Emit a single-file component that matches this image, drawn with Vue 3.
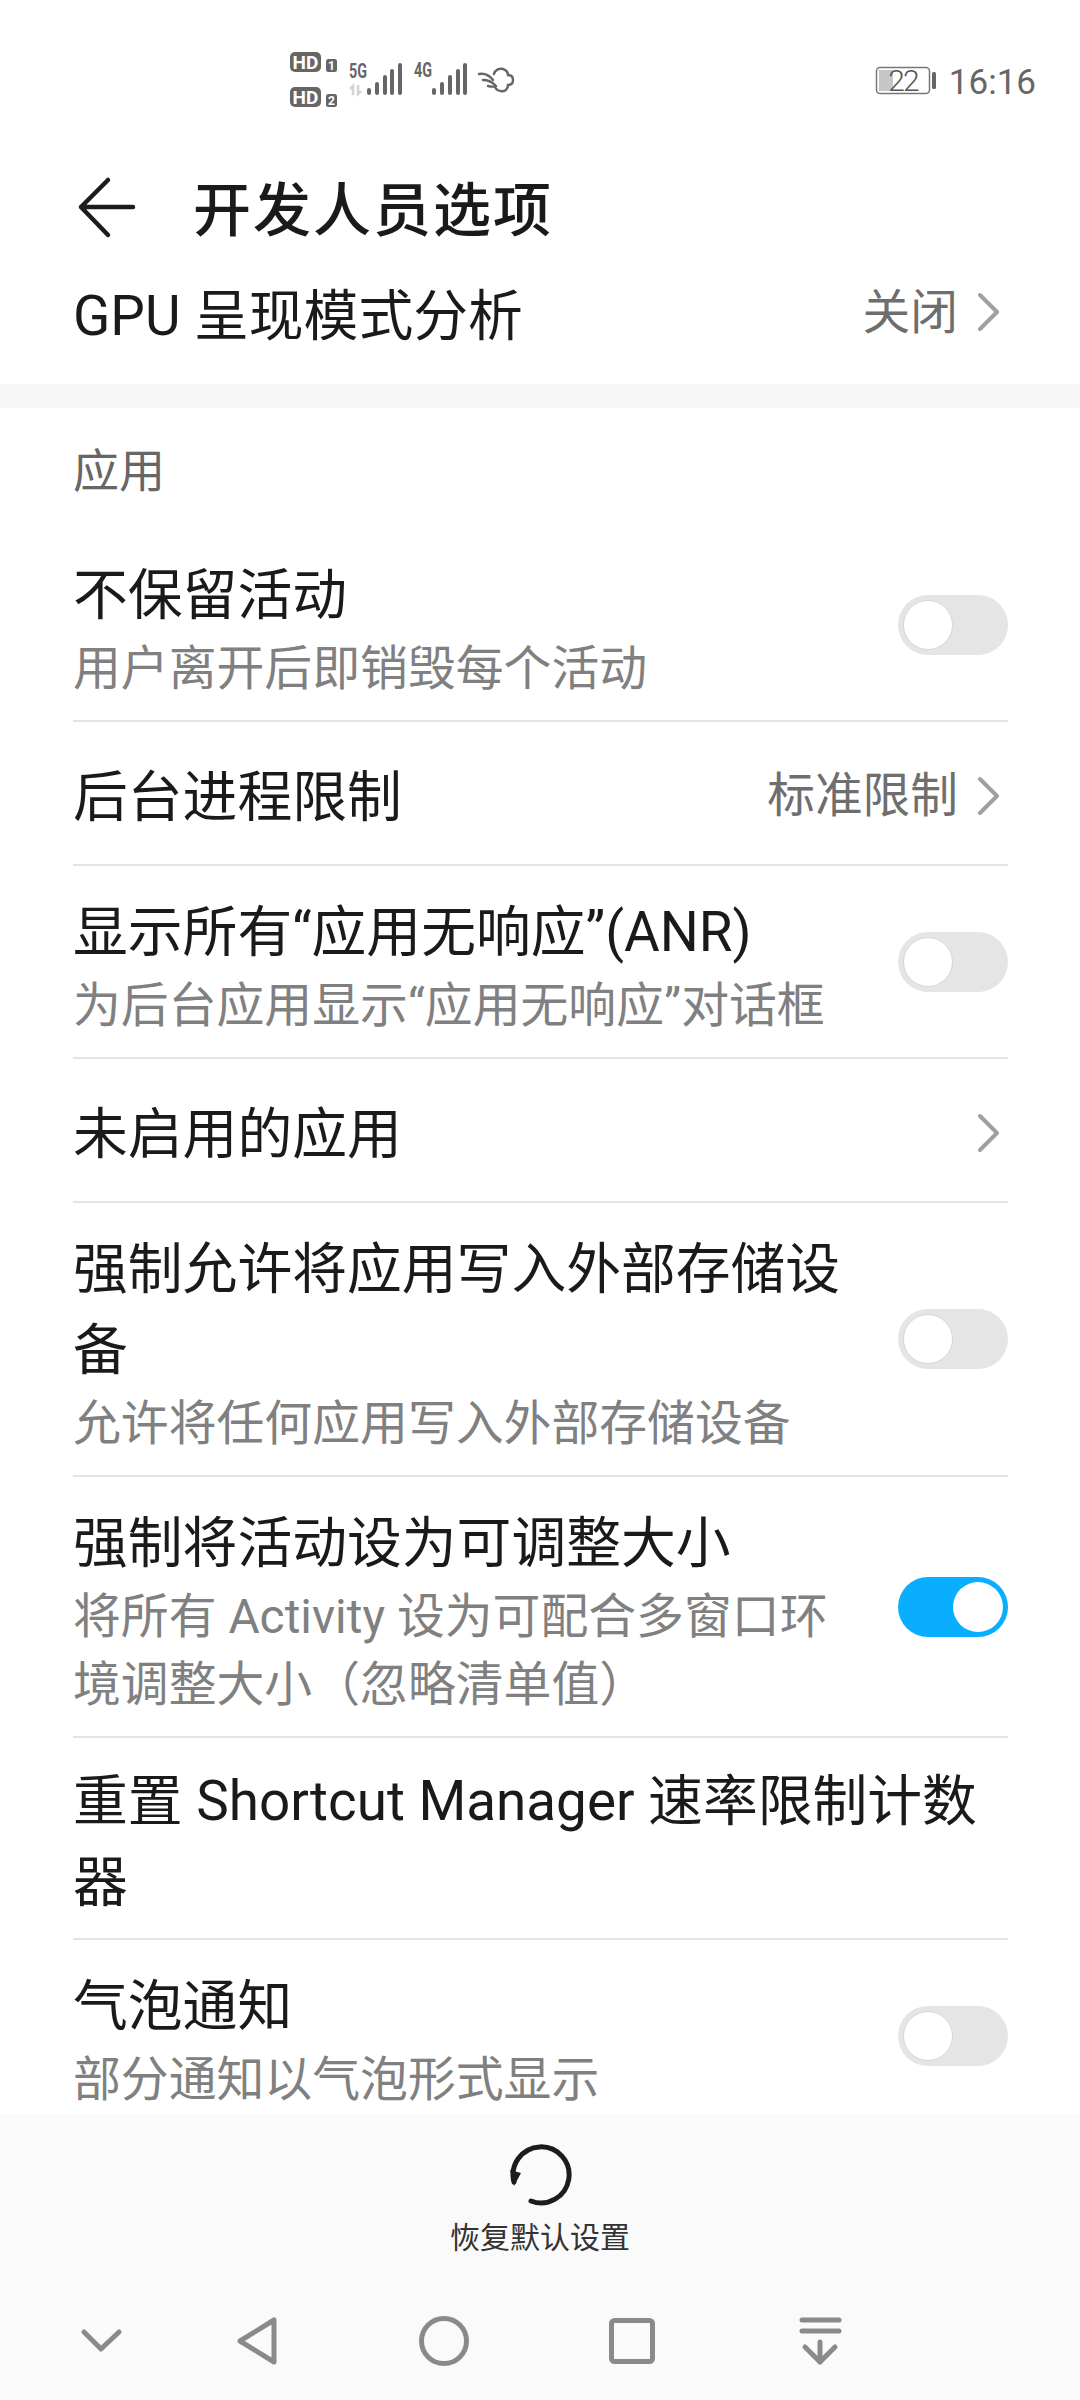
<template>
  <div class="page">
    <div class="status-bar">
      <svg class="status-icons" width="235" height="60" viewBox="285 50 235 60">
        <rect x="290" y="52" width="31" height="20" rx="5" fill="#666" />
        <text x="305.500" y="68.500" class="hd">HD</text>
        <rect x="326" y="59" width="11" height="13" rx="2.500" fill="#666" />
        <text x="331.500" y="70" class="sim">1</text>
        <rect x="290" y="87" width="31" height="20" rx="5" fill="#666" />
        <text x="305.500" y="103.500" class="hd">HD</text>
        <rect x="326" y="94" width="11" height="13" rx="2.500" fill="#666" />
        <text x="331.500" y="105" class="sim">2</text>

        <text x="349" y="78" class="net" textLength="18" lengthAdjust="spacingAndGlyphs">5G</text>
        <path d="M353 95v-9l-3 3M358 85v9l3-3" fill="none" stroke="#d4d4d4" stroke-width="2.500" />
        <g fill="#666">
          <rect x="367" y="88" width="4" height="7" rx="2" />
          <rect x="375" y="82" width="4" height="13" rx="2" />
          <rect x="383" y="75" width="4" height="20" rx="2" />
          <rect x="390" y="69" width="4" height="26" rx="2" />
          <rect x="398" y="63" width="4" height="32" rx="2" />
        </g>
        <text x="414" y="77" class="net" textLength="18" lengthAdjust="spacingAndGlyphs">4G</text>
        <g fill="#666">
          <rect x="432" y="88" width="4" height="7" rx="2" />
          <rect x="440" y="82" width="4" height="13" rx="2" />
          <rect x="448" y="75" width="4" height="20" rx="2" />
          <rect x="456" y="69" width="4" height="26" rx="2" />
          <rect x="463" y="63" width="4" height="32" rx="2" />
        </g>
        <path d="M494 74c1-4 5-6 9-5 3 1 5 3 5 6 3 0 5 2 5 5s-2 5-5 5c0 4-3 7-7 6-3 0-5-2-6-4M479 74c6-1 11 2 14 6M483 80c5 0 9 2 12 5M488 86c3 1 5 1 8 0" fill="none" stroke="#666" stroke-width="2.400" stroke-linecap="round" />
      </svg>
      <div class="status-right">
        <svg width="62" height="44" viewBox="876 58 62 44">
          <rect x="878.500" y="66.500" width="53" height="26" rx="3.500" fill="none" stroke="#777" stroke-width="1.500" />
          <rect x="881" y="69" width="14" height="21" fill="#c6c6c6" />
          <rect x="934" y="71" width="4" height="17" rx="1.500" fill="#666" />
          <text x="905" y="90" class="batt">22</text>
        </svg>
        <span class="time">16:16</span>
      </div>
    </div>

    <div class="header">
      <svg class="back" width="62" height="64" viewBox="76 175 62 64">
        <path d="M108 180 81 207l27 28M81 207h52" fill="none" stroke="#1c1c1c" stroke-width="4.500" stroke-linecap="round" stroke-linejoin="round" />
      </svg>
      <span class="title">开发人员选项</span>
    </div>

    <div class="list">
      <div class="row first">
        <div class="texts"><div class="row-title">GPU 呈现模式分析</div></div>
        <span class="value">关闭</span>
        <svg class="chev" width="28" height="40" viewBox="0 0 28 40"><path d="M2 3l17 17L2 37" fill="none" stroke="#a0a0a0" stroke-width="4" stroke-linecap="round" stroke-linejoin="round" /></svg>
      </div>
      <div class="band"></div>
      <div class="section">应用</div>

      <div class="group">
        <div v-for="item in rows" :key="item.title" class="row" :class="{ 'has-sub': item.sub }">
          <div class="texts">
            <div class="row-title">{{ item.title }}</div>
            <div v-if="item.sub" class="row-sub">{{ item.sub }}</div>
          </div>
          <span v-if="item.value" class="value">{{ item.value }}</span>
          <svg v-if="item.chevron" class="chev" width="28" height="40" viewBox="0 0 28 40"><path d="M2 3l17 17L2 37" fill="none" stroke="#a0a0a0" stroke-width="4" stroke-linecap="round" stroke-linejoin="round" /></svg>
          <div v-if="item.toggle" class="toggle" :class="{ on: item.toggle === 'on' }"><i></i></div>
        </div>
      </div>
    </div>

    <div class="bottom">
      <div class="reset">
        <svg width="70" height="70" viewBox="505 2139 70 70">
          <path d="M531 2201a28 28 0 1 0-17-19" fill="none" stroke="#1c1c1c" stroke-width="5" stroke-linecap="round" />
          <path d="M510 2170l11 3-7 13z" fill="#1c1c1c" />
        </svg>
        <span>恢复默认设置</span>
      </div>
      <div class="nav">
        <svg class="first-nav" width="60" height="60" viewBox="71 2311 60 60"><path d="M84 2332l17 17 18-17" fill="none" stroke="#8a8a8a" stroke-width="5" stroke-linecap="round" stroke-linejoin="round" /></svg>
        <svg width="60" height="60" viewBox="226 2311 60 60"><path d="M240 2341l34-21v42z" fill="none" stroke="#8a8a8a" stroke-width="5" stroke-linejoin="round" /></svg>
        <svg width="60" height="60" viewBox="414 2311 60 60"><circle cx="444" cy="2341" r="22.500" fill="none" stroke="#8a8a8a" stroke-width="5" /></svg>
        <svg width="60" height="60" viewBox="602 2311 60 60"><rect x="611.500" y="2320.500" width="41" height="41" rx="3" fill="none" stroke="#8a8a8a" stroke-width="5" /></svg>
        <svg width="60" height="60" viewBox="791 2311 60 60"><path d="M803 2320h37M803 2331h37M821 2342v20M806 2347l15 15 15-15" fill="none" stroke="#8a8a8a" stroke-width="5" stroke-linecap="round" stroke-linejoin="round" /></svg>
      </div>
    </div>
  </div>
</template>

<script setup>
const rows = [
  { title: '不保留活动', sub: '用户离开后即销毁每个活动', toggle: 'off' },
  { title: '后台进程限制', value: '标准限制', chevron: true },
  { title: '显示所有“应用无响应”(ANR)', sub: '为后台应用显示“应用无响应”对话框', toggle: 'off' },
  { title: '未启用的应用', chevron: true },
  { title: '强制允许将应用写入外部存储设备', sub: '允许将任何应用写入外部存储设备', toggle: 'off' },
  { title: '强制将活动设为可调整大小', sub: '将所有 Activity 设为可配合多窗口环境调整大小（忽略清单值）', toggle: 'on' },
  { title: '重置 Shortcut Manager 速率限制计数器' },
  { title: '气泡通知', sub: '部分通知以气泡形式显示', toggle: 'off' }
]
</script>

<style>
html, body {
  margin: 0;
  background: #fff;
}
</style>

<style scoped>
.page {
  width: 1080px;
  height: 2400px;
  display: flex;
  flex-direction: column;
  overflow: hidden;
  background: #fff;
  font-family: Roboto, "Noto Sans CJK SC", sans-serif;
  color: #1a1a1a;
}

.status-bar {
  height: 110px;
  box-sizing: border-box;
  padding: 50px 44px 0 285px;
  display: flex;
  justify-content: space-between;
  align-items: flex-start;
}
.status-icons { display: block; }
.status-icons text { font-family: Roboto, sans-serif; fill: #666; }
.status-icons .hd { font-size: 19px; font-weight: 700; fill: #fff; text-anchor: middle; }
.status-icons .sim { font-size: 12px; font-weight: 700; fill: #fff; text-anchor: middle; }
.status-icons .net { font-size: 20px; font-weight: 700; }
.status-right {
  display: flex;
  align-items: flex-start;
  gap: 13px;
  margin-top: 9px;
}
.status-right svg { display: block; }
.batt {
  font-family: Roboto, sans-serif;
  font-size: 30px;
  fill: #555;
  text-anchor: middle;
  font-weight: 300;
  letter-spacing: -2px;
}
.time {
  font-size: 35px;
  line-height: 44px;
  margin-top: 2px;
  color: #666;
}

.header {
  height: 134px;
  box-sizing: border-box;
  padding: 60px 0 0 76px;
  display: flex;
  align-items: center;
}
.back { display: block; margin-right: 55px; }
.title {
  font-size: 58px;
  line-height: 74px;
  font-weight: 500;
  letter-spacing: 2px;
  padding-top: 8px;
}

.list {
  flex: 1;
  overflow: hidden;
}
.row {
  display: flex;
  align-items: center;
  min-height: 144px;
  box-sizing: border-box;
  padding: 23px 0 15px;
  border-bottom: 2px solid #e4e4e4;
}
.row.first {
  margin: 0 72px 0 73px;
  border-bottom: none;
  padding: 32px 0 28px;
  height: 140px;
  min-height: 0;
}
.row.has-sub { padding: 26px 0 17px; }
.group { padding: 0 72px 0 73px; }
.group .row:last-child { border-bottom: none; }
.band {
  height: 24px;
  background: #f7f7f7;
}
.section {
  height: 121px;
  box-sizing: border-box;
  padding: 35px 0 0 73px;
  font-size: 46px;
  line-height: 56px;
  color: #666;
}
.texts {
  flex: 1;
  min-width: 0;
}
.row-title {
  font-size: 54.800px;
  line-height: 81px;
}
.row-sub {
  font-size: 47.850px;
  line-height: 68px;
  margin-top: -1px;
  color: #808080;
}
.has-sub .texts { padding-right: 50px; }
.value {
  font-size: 47.700px;
  line-height: 60px;
  color: #6e6e6e;
  margin-top: -3px;
  margin-right: 20px;
}
.chev { display: block; flex: none; margin-top: -3px; margin-right: 2px; }
.first .value { margin-top: -6px; }
.first .chev { margin-top: -9px; }
.toggle {
  flex: none;
  width: 110px;
  height: 60px;
  margin-top: -9px;
  border-radius: 30px;
  background: #e5e5e5;
  box-sizing: border-box;
  padding: 5px;
}
.toggle i {
  display: block;
  width: 50px;
  height: 50px;
  box-sizing: border-box;
  border-radius: 50%;
  background: #fff;
  border: 1px solid #d6d6d6;
}
.toggle.on {
  background: #0aaeff;
  display: flex;
  justify-content: flex-end;
}
.toggle.on i { border: none; }

.bottom {
  height: 286px;
  flex: none;
  background: #fafafa;
  box-sizing: border-box;
  padding-top: 25px;
}
.reset {
  display: flex;
  flex-direction: column;
  align-items: center;
  font-size: 30px;
  line-height: 40px;
  color: #333;
}
.reset svg { display: block; margin-bottom: 9px; }
.nav {
  display: flex;
  gap: 128px;
  padding: 53px 0 0 71px;
}
.nav svg { display: block; flex: none; }
.nav .first-nav { margin-right: -33px; }
</style>
